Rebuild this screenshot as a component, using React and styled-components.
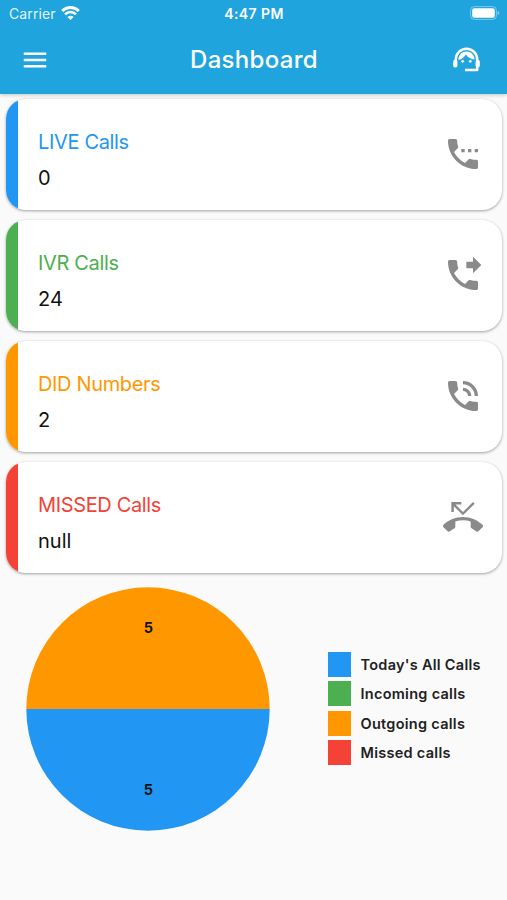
import React from "react"
import styled, { createGlobalStyle } from "styled-components"
import {
  MdMenu,
  MdSettingsPhone,
  MdPhoneForwarded,
  MdPhoneInTalk,
  MdPhoneMissed
} from "react-icons/md"

const COLORS = {
  header: "#1fa4de",
  blue: "#2196f3",
  green: "#4caf50",
  orange: "#ff9800",
  red: "#f44336",
  icon: "#8a8a8a",
  background: "#fafafa"
}

const GlobalStyle = createGlobalStyle`
  * {
    box-sizing: border-box;
  }
  body {
    margin: 0;
    background: ${COLORS.background};
    font-family: Inter, "Liberation Sans", sans-serif;
  }
  svg {
    display: block;
  }
`

const Screen = styled.div`
  height: 900px;
  overflow: hidden;
`

const Header = styled.header`
  height: 94px;
  background: ${COLORS.header};
  color: #ffffff;
  box-shadow: 0px 1px 4px rgba(0,0,0,0.22);
`

const StatusBar = styled.div`
  display: grid;
  grid-template-columns: 1fr auto 1fr;
  align-items: center;
  height: 27px;
  padding: 0px 7px 0px 9px;
  font-size: 14px;
`

const Carrier = styled.div`
  display: flex;
  align-items: center;
  gap: 5px;
  color: rgba(255,255,255,0.9);
  letter-spacing: 0.1px;
`

const Clock = styled.div`
  margin-right: 1px;
  font-size: 14px;
  font-weight: 600;
  letter-spacing: 0.4px;
`

const Battery = styled.svg`
  justify-self: end;
  margin-top: -1px;
`

const AppBar = styled.div`
  display: grid;
  grid-template-columns: 1fr auto 1fr;
  align-items: center;
  height: 65px;
  padding: 0px 27px 0px 20px;
`

const HeaderAction = styled.div`
  justify-self: ${props => props.$side};
`

const Title = styled.h1`
  margin: 0px 0px 0px 8px;
  font-size: 24px;
  font-weight: 500;
  letter-spacing: 0.3px;
`

const Cards = styled.main`
  display: flex;
  flex-direction: column;
  gap: 10px;
  padding: 5px 5px 0px 6px;
`

const Card = styled.section`
  display: flex;
  align-items: center;
  height: 111px;
  border-radius: 20px;
  overflow: hidden;
  background: #ffffff;
  box-shadow: 0px 1px 3px rgba(0,0,0,0.36);
`

const Stripe = styled.div`
  width: 12px;
  height: 100%;
  background: ${props => props.$color};
`

const CardText = styled.div`
  flex: 1;
  padding: 11px 0px 0px 20px;
  font-size: 20px;
  line-height: 24px;
`

const CardLabel = styled.div`
  color: ${props => props.$color};
  letter-spacing: -0.35px;
`

const CardValue = styled.div`
  margin-top: 12px;
  color: #111111;
`

const CardIcon = styled.div`
  margin: 0px 19px 2px 0px;
  color: ${COLORS.icon};
`

const ChartRow = styled.div`
  display: flex;
  align-items: center;
  gap: 58px;
  padding: 14px 0px 0px 26px;
`

const Pie = styled.svg`
  text {
    font-size: 14.5px;
    font-weight: 700;
    fill: #111111;
    text-anchor: middle;
  }
`

const Legend = styled.ul`
  display: flex;
  flex-direction: column;
  gap: 4.3px;
  margin: 0;
  padding: 0px 0px 1px 0px;
  list-style: none;
`

const LegendItem = styled.li`
  display: flex;
  align-items: center;
  gap: 9.5px;
  font-size: 14.5px;
  font-weight: 600;
  letter-spacing: 0.28px;
  line-height: 25px;
  color: #212121;
`

const Swatch = styled.span`
  width: 23px;
  height: 25px;
  background: ${props => props.$color};
`

const cards = [
  { label: "LIVE Calls", value: "0", color: COLORS.blue, Icon: MdSettingsPhone },
  { label: "IVR Calls", value: "24", color: COLORS.green, Icon: MdPhoneForwarded },
  { label: "DID Numbers", value: "2", color: COLORS.orange, Icon: MdPhoneInTalk },
  { label: "MISSED Calls", value: "null", color: COLORS.red, Icon: MdPhoneMissed }
]

const legend = [
  { label: "Today's All Calls", color: COLORS.blue },
  { label: "Incoming calls", color: COLORS.green },
  { label: "Outgoing calls", color: COLORS.orange },
  { label: "Missed calls", color: COLORS.red }
]

const WifiIcon = () => (
  <svg width="19" height="15" viewBox="0 0 19 15" fill="none" stroke="#ffffff">
    <path d="M1.2 5a11.7 11.7 0 0 1 16.6 0" strokeWidth="2.9" />
    <path d="M4.1 8.3a7.6 7.6 0 0 1 10.8 0" strokeWidth="2.6" />
    <path d="M6.5 10.9a4.2 4.2 0 0 1 6 0L9.5 14z" fill="#ffffff" stroke="none" />
  </svg>
)

const BatteryIcon = () => (
  <Battery width="30" height="14" viewBox="0 0 30 14">
    <rect x="0.6" y="0.6" width="25.8" height="12.8" rx="3.6" fill="none" stroke="#ffffff" strokeOpacity="0.4" />
    <rect x="2.2" y="2.2" width="22.6" height="9.6" rx="2" fill="#ffffff" />
    <path d="M27.6 5v4c1-.3 1.7-1.1 1.7-2s-.7-1.7-1.7-2z" fill="#ffffff" fillOpacity="0.45" />
  </Battery>
)

const AgentIcon = () => (
  <svg width="27" height="25" viewBox="0 0 27 25" fill="#ffffff">
    {/* headband and microphone arm */}
    <path
      d="M2.8 18V12.600a10.700 10.900 0 0 1 21.400 0V22.900H12"
      fill="none"
      stroke="#ffffff"
      strokeWidth="2.5"
      strokeLinejoin="round"
    />
    <rect x="0.2" y="13" width="4.2" height="7.4" rx="1.7" />
    <rect x="22.6" y="13" width="4.2" height="7.4" rx="1.7" />
    {/* fringe and eyes */}
    <path d="M5.4 13C5.6 8 9.1 4.6 13.500 4.600s7.900 3.400 8.100 7.900C18 12.300 14.600 10.400 12.800 7.500 11.500 10.100 8.900 12.300 5.400 13z" />
    <circle cx="9.7" cy="14.300" r="1.4" />
    <circle cx="17.300" cy="14.300" r="1.4" />
  </svg>
)

const App = () => {
  return (
    <>
      <GlobalStyle />
      <Screen>
        <Header>
          <StatusBar>
            <Carrier>
              Carrier
              <WifiIcon />
            </Carrier>
            <Clock>4:47 PM</Clock>
            <BatteryIcon />
          </StatusBar>
          <AppBar>
            <HeaderAction $side="start">
              <MdMenu size={30} />
            </HeaderAction>
            <Title>Dashboard</Title>
            <HeaderAction $side="end">
              <AgentIcon />
            </HeaderAction>
          </AppBar>
        </Header>
        <Cards>
          {cards.map(({ label, value, color, Icon }) => (
            <Card key={label}>
              <Stripe $color={color} />
              <CardText>
                <CardLabel $color={color}>{label}</CardLabel>
                <CardValue>{value}</CardValue>
              </CardText>
              <CardIcon>
                <Icon size={40} />
              </CardIcon>
            </Card>
          ))}
        </Cards>
        <ChartRow>
          <Pie width="244" height="244" viewBox="0 0 244 244">
            <path d="M0.3 122a121.7 121.7 0 0 1 243.4 0z" fill={COLORS.orange} />
            <path d="M0.3 122a121.7 121.7 0 0 0 243.4 0z" fill={COLORS.blue} />
            <text x="122.3" y="46">5</text>
            <text x="122.3" y="208">5</text>
          </Pie>
          <Legend>
            {legend.map(({ label, color }) => (
              <LegendItem key={label}>
                <Swatch $color={color} />
                {label}
              </LegendItem>
            ))}
          </Legend>
        </ChartRow>
      </Screen>
    </>
  )
}

export default App
